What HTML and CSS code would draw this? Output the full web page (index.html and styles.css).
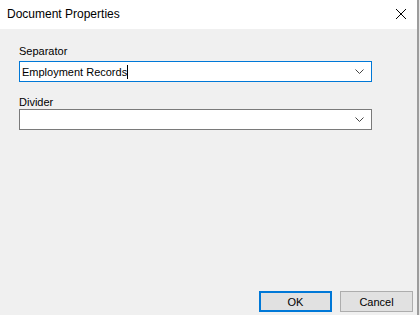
FILE: index.html
```html
<!DOCTYPE html>
<html>
<head>
  <title>Document Properties</title>
  <link rel="stylesheet" href="styles.css">
</head>
<body>

  <div class="window">
    <div class="title-bar">
      <span class="title">Document Properties</span>
      <svg class="close" width="12" height="12" viewBox="0 0 12 12">
        <path d="M1 1 L11 11 M11 1 L1 11" stroke="#000" stroke-width="1" fill="none"/>
      </svg>
    </div>

    <div class="content">
      <label class="field-label">Separator</label>
      <div class="combo combo-focus">
        <span class="combo-text">Employment Records</span><span class="caret"></span>
        <svg class="chevron" width="9" height="5" viewBox="0 0 9 5">
          <path d="M0.5 0.5 L4.5 4.5 L8.5 0.5" stroke="#444" stroke-width="1" fill="none"/>
        </svg>
      </div>

      <label class="field-label second">Divider</label>
      <div class="combo">
        <span class="combo-text"></span>
        <svg class="chevron" width="9" height="5" viewBox="0 0 9 5">
          <path d="M0.5 0.5 L4.5 4.5 L8.5 0.5" stroke="#444" stroke-width="1" fill="none"/>
        </svg>
      </div>

      <div class="buttons">
        <button class="btn btn-default">OK</button>
        <button class="btn">Cancel</button>
      </div>
    </div>
  </div>

</body>
</html>
```

FILE: styles.css
```css
html, body {
  margin: 0;
  padding: 0;
}
body {
  width: 420px;
  height: 315px;
  overflow: hidden;
  background-color: #e6e6e6;
  font-family: "Liberation Sans", Arial, sans-serif;
  font-size: 11px;
  color: #000;
}
.window {
  width: 417px;
  height: 315px;
  border-right: 2px solid #9c9c9c;
  display: flex;
  flex-direction: column;
  background-color: #f0f0f0;
}
.title-bar {
  height: 29px;
  background-color: #fff;
  display: flex;
  align-items: center;
  justify-content: space-between;
  padding: 0 10px 0 7px;
  flex-shrink: 0;
}
.title {
  font-size: 12px;
  padding-bottom: 2px;
}
.close {
  display: block;
  margin-bottom: 2px;
}
.content {
  flex: 1;
  display: flex;
  flex-direction: column;
  padding: 15px 45px 0 19px;
}
.field-label {
  display: block;
  line-height: 14px;
  margin-bottom: 3px;
}
.field-label.second {
  margin-top: 13px;
  margin-bottom: 0;
}
.combo {
  height: 21px;
  box-sizing: border-box;
  border: 1px solid #7a7a7a;
  background-color: #fff;
  display: flex;
  align-items: center;
  padding: 0 7px 0 2px;
}
.combo-focus {
  border-color: #0078d7;
}
.combo-text {
  line-height: 14px;
}
.caret {
  display: inline-block;
  width: 1px;
  height: 14px;
  background-color: #000;
}
.chevron {
  display: block;
  margin-left: auto;
}
.buttons {
  margin-top: auto;
  margin-bottom: 3px;
  display: flex;
  justify-content: flex-end;
  gap: 8px;
  margin-right: -41px;
}
.btn {
  width: 73px;
  height: 21px;
  box-sizing: border-box;
  background-color: #e1e1e1;
  border: 1px solid #adadad;
  font-family: "Liberation Sans", Arial, sans-serif;
  font-size: 11px;
  color: #000;
  padding: 0;
}
.btn-default {
  border: 2px solid #0078d7;
}
```
